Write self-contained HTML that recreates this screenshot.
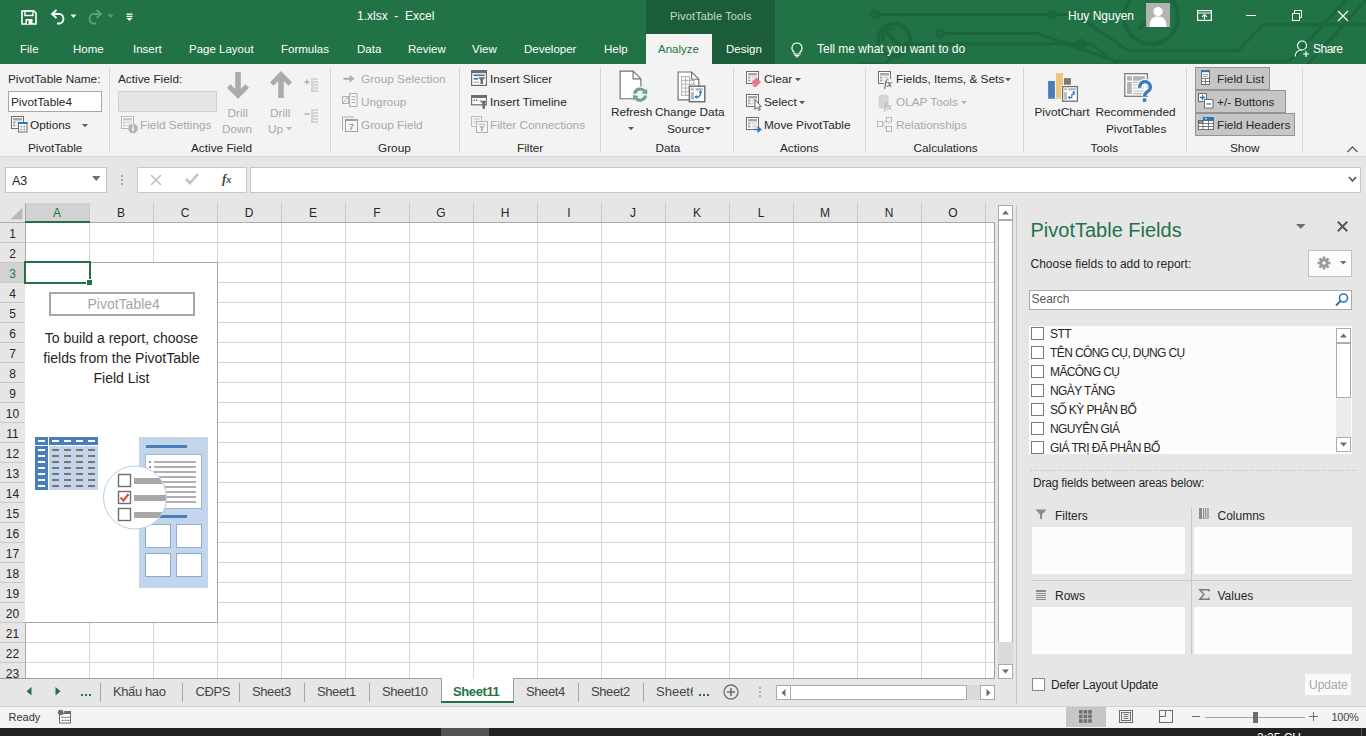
<!DOCTYPE html>
<html><head><meta charset="utf-8"><title>Excel</title>
<style>
html,body{margin:0;padding:0;width:1366px;height:736px;overflow:hidden;background:#e6e6e6;font-family:"Liberation Sans",sans-serif}
.a{position:absolute;box-sizing:border-box}
.t{position:absolute;white-space:nowrap;line-height:1;font-family:"Liberation Sans",sans-serif}
svg{overflow:visible}
</style></head><body>
<div class="a" style="left:0px;top:0px;width:1366px;height:64px;background:#217346"></div>
<div class="a" style="left:0px;top:64px;width:1366px;height:92px;background:#f3f3f3"></div>
<div class="a" style="left:0px;top:156px;width:1366px;height:1px;background:#d4d4d4"></div>
<div class="a" style="left:0px;top:157px;width:1366px;height:571px;background:#e6e6e6"></div>
<div class="a" style="left:0px;top:728px;width:1366px;height:8px;background:#1f1f1f"></div>
<svg class="a" style="left:0px;top:0px;clip-path:inset(0 0 0 0)" width="1366" height="64" viewBox="0 0 1366 64"><g fill="none" stroke="#1c663c" stroke-width="3">
<path d="M875 14.5 H1075 L1129 51 H1238 L1263 24.8 H1366"/>
<circle cx="875" cy="14.5" r="3.5"/><circle cx="1053" cy="14.5" r="3.5"/>
<path d="M941 33.5 H1038 L1115 61 H1290 L1347 -1"/><circle cx="941" cy="33.5" r="3.5"/>
<path d="M855 66 L863 64 H885 L906 43.8 H1091 L1118 65"/><circle cx="1081" cy="43.8" r="3.5"/>
<circle cx="894" cy="40" r="16" stroke-width="4"/><path d="M884 30 L900 46 M883 29 H895 M883 29 V41" stroke-width="4"/>
<circle cx="1151" cy="17" r="27" stroke-width="4"/><path d="M1138 30 L1160 8 M1161 7 H1149 M1161 7 V19" stroke-width="4"/>
<path d="M1307 65 L1367 -1"/>
</g></svg>
<div class="a" style="left:646px;top:0px;width:129px;height:64px;background:#1b5d39"></div>
<div class="a" style="left:646px;top:34px;width:66px;height:30px;background:#f3f3f3"></div>
<svg class="a" style="left:21px;top:10px;" width="16" height="15" viewBox="0 0 16 15"><path d="M1 1 H13 L15 3 V14 H1 Z" fill="none" stroke="#fff" stroke-width="1.6"/><rect x="4" y="1" width="8" height="4.5" fill="none" stroke="#fff" stroke-width="1.4"/><rect x="4.5" y="9" width="7" height="5" fill="#fff"/><rect x="6" y="10.5" width="1.6" height="3.5" fill="#217346"/></svg>
<svg class="a" style="left:50px;top:9px;" width="17" height="15" viewBox="0 0 17 15"><path d="M3 5 H10 A5 5 0 0 1 10 14.5 H7" fill="none" stroke="#fff" stroke-width="1.8"/><path d="M6.5 1 L2 5 L6.5 9" fill="none" stroke="#fff" stroke-width="1.8"/></svg>
<svg class="a" style="left:70px;top:14px;" width="7" height="5" viewBox="0 0 7 5"><path d="M0.5 0.5 H6.5 L3.5 4 Z" fill="#fff"/></svg>
<svg class="a" style="left:86px;top:9px;" width="17" height="15" viewBox="0 0 17 15"><path d="M14 5 H7 A5 5 0 0 0 7 14.5 H10" fill="none" stroke="#5f9d7a" stroke-width="1.8"/><path d="M10.5 1 L15 5 L10.5 9" fill="none" stroke="#5f9d7a" stroke-width="1.8"/></svg>
<svg class="a" style="left:107px;top:14px;" width="7" height="5" viewBox="0 0 7 5"><path d="M0.5 0.5 H6.5 L3.5 4 Z" fill="#5f9d7a"/></svg>
<svg class="a" style="left:126px;top:13px;" width="7" height="8" viewBox="0 0 7 8"><rect x="0.5" y="0.5" width="6" height="1.3" fill="#fff"/><rect x="0.5" y="2.8" width="6" height="1.3" fill="#fff"/><path d="M0.5 5 H6.5 L3.5 8 Z" fill="#fff"/></svg>
<div class="t" style="left:357px;top:10px;font-size:12px;color:#ffffff;">1.xlsx&nbsp;&nbsp;-&nbsp;&nbsp;Excel</div>
<div class="t" style="left:670px;top:11px;font-size:11.1px;color:#c5dccd;letter-spacing:0.1px">PivotTable Tools</div>
<div class="t" style="left:20px;top:44px;font-size:11.5px;color:#ffffff;">File</div>
<div class="t" style="left:73px;top:44px;font-size:11.5px;color:#ffffff;">Home</div>
<div class="t" style="left:133px;top:44px;font-size:11.5px;color:#ffffff;">Insert</div>
<div class="t" style="left:189px;top:44px;font-size:11.5px;color:#ffffff;">Page Layout</div>
<div class="t" style="left:281px;top:44px;font-size:11.5px;color:#ffffff;">Formulas</div>
<div class="t" style="left:357px;top:44px;font-size:11.5px;color:#ffffff;">Data</div>
<div class="t" style="left:408px;top:44px;font-size:11.5px;color:#ffffff;">Review</div>
<div class="t" style="left:472px;top:44px;font-size:11.5px;color:#ffffff;">View</div>
<div class="t" style="left:524px;top:44px;font-size:11.5px;color:#ffffff;">Developer</div>
<div class="t" style="left:604px;top:44px;font-size:11.5px;color:#ffffff;">Help</div>
<div class="t" style="left:726px;top:44px;font-size:11.5px;color:#ffffff;">Design</div>
<div class="t" style="left:658px;top:44px;font-size:11.5px;color:#217346;">Analyze</div>
<svg class="a" style="left:790px;top:42px;" width="14" height="15" viewBox="0 0 14 15"><path d="M7 1 A5 5 0 0 1 10 10 V12 H4 V10 A5 5 0 0 1 7 1 Z" fill="none" stroke="#fff" stroke-width="1.2"/><path d="M4.5 13.5 H9.5 M5.5 14.8 H8.5" stroke="#fff" stroke-width="1"/></svg>
<div class="t" style="left:817px;top:43px;font-size:12px;color:#ffffff;">Tell me what you want to do</div>
<div class="t" style="left:1068px;top:10px;font-size:12px;color:#ffffff;">Huy Nguyen</div>
<div class="a" style="left:1146px;top:3px;width:24px;height:24px;background:#b3b3b3"></div>
<svg class="a" style="left:1146px;top:3px;" width="24" height="24" viewBox="0 0 24 24"><circle cx="12" cy="8.5" r="4.6" fill="#fff"/><path d="M3.5 24 C3.5 16 7 13.5 12 13.5 C17 13.5 20.5 16 20.5 24 Z" fill="#fff"/></svg>
<svg class="a" style="left:1197px;top:10px;" width="15" height="11" viewBox="0 0 15 11"><rect x="0.6" y="0.6" width="13.8" height="9.8" fill="none" stroke="#fff" stroke-width="1.2"/><path d="M0.6 3 H14.4" stroke="#fff" stroke-width="1"/><path d="M7.5 9.5 V4.5 M5 7 L7.5 4.5 L10 7" fill="none" stroke="#fff" stroke-width="1.1"/></svg>
<div class="a" style="left:1246px;top:15px;width:10px;height:1px;background:#fff"></div>
<svg class="a" style="left:1291px;top:9px;" width="12" height="12" viewBox="0 0 12 12"><rect x="1.5" y="4.5" width="7" height="7" fill="none" stroke="#fff" stroke-width="1"/><path d="M3.5 4.5 V1.5 H10.5 V8.5 H8.5" fill="none" stroke="#fff" stroke-width="1"/></svg>
<svg class="a" style="left:1337px;top:10px;" width="12" height="12" viewBox="0 0 12 12"><path d="M1 1 L11 11 M11 1 L1 11" stroke="#fff" stroke-width="1.2"/></svg>
<svg class="a" style="left:1294px;top:40px;" width="16" height="17" viewBox="0 0 16 17"><circle cx="8" cy="5.5" r="4.5" fill="none" stroke="#fff" stroke-width="1.2"/><path d="M1 16.5 C1.5 12 4 10 8 10" fill="none" stroke="#fff" stroke-width="1.2"/><path d="M12 11 V17 M9 14 H15" stroke="#fff" stroke-width="1.2"/></svg>
<div class="t" style="left:1313px;top:43px;font-size:12px;color:#ffffff;letter-spacing:-0.5px">Share</div>
<div class="t" style="left:8px;top:74px;font-size:11.8px;color:#262626;">PivotTable Name:</div>
<div class="a" style="left:8px;top:91px;width:94px;height:21px;background:#fff;border:1px solid #a6a6a6"></div>
<div class="t" style="left:11px;top:97px;font-size:11.8px;color:#262626;">PivotTable4</div>
<svg class="a" style="left:11px;top:116px;" width="17" height="17" viewBox="0 0 17 17"><rect x="0.5" y="0.5" width="12" height="12" fill="#fff" stroke="#6d6d6d"/><rect x="2" y="2" width="9" height="2.5" fill="#a6a6a6"/><rect x="2" y="5.5" width="2.5" height="2" fill="#a6a6a6"/><rect x="2" y="8.5" width="2.5" height="2" fill="#a6a6a6"/><rect x="5.5" y="5.5" width="5.5" height="2" fill="#d6d6d6"/><rect x="5.5" y="8.5" width="5.5" height="2" fill="#d6d6d6"/><rect x="7.5" y="6.5" width="8.5" height="9.5" fill="#fff" stroke="#6d6d6d"/><rect x="7" y="6" width="9.5" height="2" fill="#2e75b6"/><path d="M9.5 10.5 h1.5 M12.5 10.5 h1.5 M9.5 13.5 h1.5 M12.5 13.5 h1.5" stroke="#8a8a8a" stroke-width="1.3"/></svg>
<div class="t" style="left:30px;top:120px;font-size:11.8px;color:#262626;">Options</div>
<svg class="a" style="left:82px;top:124px;" width="6" height="4" viewBox="0 0 6 4"><path d="M0 0 H6 L3 3.2 Z" fill="#595959"/></svg>
<div class="t" style="left:28px;top:143px;font-size:11.8px;color:#262626;">PivotTable</div>
<div class="a" style="left:109px;top:68px;width:1px;height:84px;background:#d5d5d5"></div>
<div class="t" style="left:118px;top:74px;font-size:11.8px;color:#262626;">Active Field:</div>
<div class="a" style="left:118px;top:91px;width:99px;height:21px;background:#e6e6e6;border:1px solid #d0d0d0"></div>
<svg class="a" style="left:121px;top:116px;" width="17" height="17" viewBox="0 0 17 17"><rect x="0.5" y="0.5" width="12" height="12" fill="#fff" stroke="#b8b8b8"/><rect x="2" y="2" width="9" height="2.5" fill="#c8c8c8"/><rect x="2" y="5.5" width="2.5" height="2" fill="#c8c8c8"/><rect x="2" y="8.5" width="2.5" height="2" fill="#c8c8c8"/><rect x="5.5" y="5.5" width="5.5" height="2" fill="#d6d6d6"/><rect x="5.5" y="8.5" width="5.5" height="2" fill="#d6d6d6"/><circle cx="12" cy="12.5" r="4.8" fill="#b4b4b4"/><rect x="11.1" y="11.2" width="1.8" height="4" fill="#f3f3f3"/><rect x="11.1" y="8.8" width="1.8" height="1.6" fill="#f3f3f3"/></svg>
<div class="t" style="left:140px;top:120px;font-size:11.8px;color:#a8a8a8;">Field Settings</div>
<svg class="a" style="left:227px;top:72px;" width="22" height="28" viewBox="0 0 22 28"><path d="M8.2 0 H13.8 V17 L18.5 12.3 L22 15.8 L11 27 L0 15.8 L3.5 12.3 L8.2 17 Z" fill="#ababab"/></svg>
<div class="t" style="left:227.5px;top:108px;font-size:11.8px;color:#a8a8a8;">Drill</div>
<div class="t" style="left:222px;top:123.5px;font-size:11.8px;color:#a8a8a8;">Down</div>
<svg class="a" style="left:270px;top:71px;" width="22" height="28" viewBox="0 0 22 28"><path d="M8.2 27 H13.8 V10 L18.5 14.7 L22 11.2 L11 0 L0 11.2 L3.5 14.7 L8.2 10 Z" fill="#ababab"/></svg>
<div class="t" style="left:270px;top:108px;font-size:11.8px;color:#a8a8a8;">Drill</div>
<div class="t" style="left:268px;top:123.5px;font-size:11.8px;color:#a8a8a8;">Up</div>
<svg class="a" style="left:286px;top:127px;" width="6" height="4" viewBox="0 0 6 4"><path d="M0 0 H6 L3 3.2 Z" fill="#b0b0b0"/></svg>
<svg class="a" style="left:304px;top:78px;" width="15" height="14" viewBox="0 0 15 14"><path d="M0.5 4 H5.5 M3 1.5 V6.5" stroke="#b0b0b0" stroke-width="1.5"/><path d="M7 1 H14 M9 4 H14 M9 7 H14 M9 10 H14 M7 13 H14 M8 2 V13" stroke="#b8b8b8" stroke-width="1"/></svg>
<svg class="a" style="left:304px;top:109px;" width="15" height="14" viewBox="0 0 15 14"><path d="M0.5 5 H5.5" stroke="#b0b0b0" stroke-width="1.5"/><path d="M7 1 H14 M9 4 H14 M9 7 H14 M9 10 H14 M7 13 H14 M8 2 V13" stroke="#b8b8b8" stroke-width="1"/></svg>
<div class="t" style="left:191px;top:143px;font-size:11.8px;color:#262626;">Active Field</div>
<div class="a" style="left:330px;top:68px;width:1px;height:84px;background:#d5d5d5"></div>
<svg class="a" style="left:343px;top:75px;" width="13" height="8" viewBox="0 0 13 8"><path d="M0.5 2.8 H6.5 V0 L11.5 3.8 L6.5 7.6 V4.8 H0.5 Z" fill="#ababab"/></svg>
<div class="t" style="left:361px;top:74px;font-size:11.8px;color:#a8a8a8;">Group Selection</div>
<svg class="a" style="left:342px;top:93px;" width="16" height="14" viewBox="0 0 16 14"><rect x="0.5" y="3.5" width="6" height="7" fill="none" stroke="#b0b0b0"/><path d="M1 10 L6 4" stroke="#b0b0b0"/><rect x="7.5" y="0.5" width="7.5" height="13" fill="none" stroke="#b0b0b0"/><path d="M9.5 3.5 H13 M9.5 6.5 H13 M9.5 9.5 H13" stroke="#b0b0b0"/></svg>
<div class="t" style="left:361px;top:97px;font-size:11.8px;color:#a8a8a8;">Ungroup</div>
<svg class="a" style="left:342px;top:116px;" width="16" height="16" viewBox="0 0 16 16"><path d="M0.5 15 V1 H12" fill="none" stroke="#b0b0b0"/><rect x="3.5" y="3.5" width="12" height="12" fill="#f7f4f8" stroke="#a0a0a0"/><rect x="3.5" y="3" width="12" height="2" fill="#a0a0a0"/><text x="9.5" y="14.3" font-size="9.5" font-weight="bold" text-anchor="middle" fill="#a0a0a0" font-family="Liberation Sans">7</text></svg>
<div class="t" style="left:361px;top:120px;font-size:11.8px;color:#a8a8a8;">Group Field</div>
<div class="t" style="left:378px;top:143px;font-size:11.8px;color:#262626;">Group</div>
<div class="a" style="left:459px;top:68px;width:1px;height:84px;background:#d5d5d5"></div>
<svg class="a" style="left:471px;top:70px;" width="16" height="16" viewBox="0 0 16 16"><rect x="0.6" y="0.6" width="14.8" height="14.8" fill="#fff" stroke="#6d6d6d" stroke-width="1.2"/><rect x="0" y="0" width="16" height="3.2" fill="#6d6d6d"/><rect x="2.5" y="4.5" width="11" height="1.6" fill="#2e75b6"/><rect x="2.5" y="8" width="4.5" height="1.6" fill="#2e75b6"/><rect x="2.5" y="11.5" width="5.5" height="1.6" fill="#9dc3e6"/><path d="M7 7.2 H14.5 L12 10 V14 H9.5 V10 Z" fill="#6d6d6d"/></svg>
<div class="t" style="left:490px;top:74px;font-size:11.8px;color:#262626;">Insert Slicer</div>
<svg class="a" style="left:471px;top:95px;" width="17" height="15" viewBox="0 0 17 15"><rect x="0.6" y="0.6" width="14.8" height="9.2" fill="#fff" stroke="#6d6d6d" stroke-width="1.2"/><rect x="0" y="0" width="16" height="3" fill="#6d6d6d"/><path d="M2.5 5.3 h1.4 M5 5.3 h1.4" stroke="#2e75b6" stroke-width="1.5"/><path d="M8.5 5.3 h1.2" stroke="#9a9a9a" stroke-width="1.2"/><rect x="8" y="5.6" width="9" height="2" fill="#f3f3f3"/><path d="M9 5.8 H16.5 L14 8.8 V13.8 H11.5 V8.8 Z" fill="#6d6d6d"/></svg>
<div class="t" style="left:490px;top:97px;font-size:11.8px;color:#262626;">Insert Timeline</div>
<svg class="a" style="left:471px;top:116px;" width="17" height="17" viewBox="0 0 17 17"><rect x="0.5" y="0.5" width="10" height="10" fill="#f3f3f3" stroke="#bdbdbd"/><path d="M2.5 3 H8.5 M2.5 6 H4.5" stroke="#cfcfcf" stroke-width="1.4"/><rect x="5.5" y="5.5" width="11" height="11" fill="#f7f4f8" stroke="#b0b0b0"/><path d="M7.5 8.3 H14.5" stroke="#c0c0c0" stroke-width="1.2"/><path d="M8 10 H14 L12 12.3 V15 H10 V12.3 Z" fill="#b8b8b8"/></svg>
<div class="t" style="left:490px;top:120px;font-size:11.8px;color:#a8a8a8;">Filter Connections</div>
<div class="t" style="left:517px;top:143px;font-size:11.8px;color:#262626;">Filter</div>
<div class="a" style="left:600px;top:68px;width:1px;height:84px;background:#d5d5d5"></div>
<svg class="a" style="left:605px;top:66px;" width="120" height="40" viewBox="0 0 120 40"><path d="M15.1 5.1 H28.1 L35.9 12.9 V32.7 H15.1 Z" fill="#fff" stroke="#707070" stroke-width="1.15"/><path d="M28.1 5.1 V12.9 H35.9" fill="none" stroke="#707070" stroke-width="1.15"/><circle cx="35.1" cy="28.6" r="8.3" fill="#f3f3f3"/><path d="M29.59 27.63 A5.6 5.6 0 0 1 39.39 25.00" fill="none" stroke="#64a58c" stroke-width="3"/><path d="M42.09 28.22 L42.15 22.69 L36.63 27.31 Z" fill="#64a58c"/><path d="M40.61 29.57 A5.6 5.6 0 0 1 30.81 32.20" fill="none" stroke="#64a58c" stroke-width="3"/><path d="M28.11 28.98 L28.05 34.51 L33.57 29.89 Z" fill="#64a58c"/><path d="M73.1 6 H86.6 L93.8 13.2 V33.8 H73.1 Z" fill="#fff" stroke="#707070" stroke-width="1.15"/><path d="M86.6 6 V13.2 H93.8" fill="none" stroke="#707070" stroke-width="1.15"/><g stroke="#b8b8b8" stroke-width="1.1" fill="none"><rect x="76.6" y="10.6" width="8" height="18.8"/><path d="M80.6 10.6 V29.4 M76.6 14.4 H90 M76.6 18.2 H90 M76.6 22 H84 M76.6 25.7 H84 M88.6 15 V19"/></g><rect x="84.4" y="20.2" width="15.4" height="15.5" fill="#fff" stroke="#707070" stroke-width="1.5"/><rect x="86.1" y="22.2" width="2.8" height="2.4" fill="#b4b4b4"/><rect x="90.4" y="22.2" width="7.4" height="2.4" fill="#b4b4b4"/><rect x="86.1" y="26.2" width="2.8" height="7.4" fill="#b4b4b4"/><path d="M90.5 31 H93.5 L95.5 28.5 V25.8" fill="none" stroke="#2e75b6" stroke-width="1.3"/><path d="M89.3 31 L91.8 29 V33 Z M95.5 24.3 L93.5 26.8 H97.5 Z" fill="#2e75b6"/></svg>
<div class="t" style="left:611px;top:107px;font-size:11.8px;color:#262626;">Refresh</div>
<svg class="a" style="left:628px;top:127px;" width="6" height="4" viewBox="0 0 6 4"><path d="M0 0 H6 L3 3.2 Z" fill="#595959"/></svg>
<div class="t" style="left:655px;top:107px;font-size:11.8px;color:#262626;">Change Data</div>
<div class="t" style="left:667px;top:123.5px;font-size:11.8px;color:#262626;">Source</div>
<svg class="a" style="left:705px;top:127px;" width="6" height="4" viewBox="0 0 6 4"><path d="M0 0 H6 L3 3.2 Z" fill="#595959"/></svg>
<div class="t" style="left:655.5px;top:143px;font-size:11.8px;color:#262626;">Data</div>
<div class="a" style="left:733px;top:68px;width:1px;height:84px;background:#d5d5d5"></div>
<svg class="a" style="left:746px;top:71px;" width="16" height="16" viewBox="0 0 16 16"><rect x="0.5" y="0.5" width="12" height="12" fill="#fff" stroke="#6d6d6d"/><rect x="2" y="2" width="9" height="2.5" fill="#a6a6a6"/><rect x="2" y="5.5" width="2.5" height="2" fill="#a6a6a6"/><rect x="2" y="8.5" width="2.5" height="2" fill="#a6a6a6"/><rect x="5.5" y="5.5" width="5.5" height="2" fill="#d6d6d6"/><rect x="5.5" y="8.5" width="5.5" height="2" fill="#d6d6d6"/><path d="M5.5 11.5 L10.5 6.5 L15 11 L10 16 H7.5 Z" fill="#e8788e"/><path d="M5.5 11.5 L8 14 L7.5 16 Z" fill="#f3f3f3" opacity="0.4"/></svg>
<div class="t" style="left:764px;top:74px;font-size:11.8px;color:#262626;">Clear</div>
<svg class="a" style="left:795px;top:78px;" width="6" height="4" viewBox="0 0 6 4"><path d="M0 0 H6 L3 3.2 Z" fill="#595959"/></svg>
<svg class="a" style="left:746px;top:94px;" width="16" height="17" viewBox="0 0 16 17"><rect x="0.5" y="0.5" width="12" height="12" fill="#fff" stroke="#6d6d6d"/><rect x="2" y="2" width="9" height="2.5" fill="#a6a6a6"/><rect x="2" y="5.5" width="2.5" height="2" fill="#a6a6a6"/><rect x="2" y="8.5" width="2.5" height="2" fill="#a6a6a6"/><rect x="5.5" y="5.5" width="5.5" height="2" fill="#d6d6d6"/><rect x="5.5" y="8.5" width="5.5" height="2" fill="#d6d6d6"/><path d="M9 5.5 V15.5 L11.2 13.4 L12.8 16.5 L14.3 15.7 L12.8 12.8 H15.3 Z" fill="#fff" stroke="#505050" stroke-width="0.9"/></svg>
<div class="t" style="left:764px;top:97px;font-size:11.8px;color:#262626;">Select</div>
<svg class="a" style="left:799px;top:101px;" width="6" height="4" viewBox="0 0 6 4"><path d="M0 0 H6 L3 3.2 Z" fill="#595959"/></svg>
<svg class="a" style="left:746px;top:117px;" width="16" height="16" viewBox="0 0 16 16"><rect x="0.5" y="0.5" width="12" height="12" fill="#fff" stroke="#6d6d6d"/><rect x="2" y="2" width="9" height="2.5" fill="#a6a6a6"/><rect x="2" y="5.5" width="2.5" height="2" fill="#a6a6a6"/><rect x="2" y="8.5" width="2.5" height="2" fill="#a6a6a6"/><rect x="5.5" y="5.5" width="5.5" height="2" fill="#d6d6d6"/><rect x="5.5" y="8.5" width="5.5" height="2" fill="#d6d6d6"/><path d="M8 12.5 H14 M11.5 10 L14.5 12.5 L11.5 15" fill="none" stroke="#2e75b6" stroke-width="1.7"/></svg>
<div class="t" style="left:764px;top:120px;font-size:11.8px;color:#262626;">Move PivotTable</div>
<div class="t" style="left:780px;top:143px;font-size:11.8px;color:#262626;">Actions</div>
<div class="a" style="left:865px;top:68px;width:1px;height:84px;background:#d5d5d5"></div>
<svg class="a" style="left:878px;top:71px;" width="16" height="17" viewBox="0 0 16 17"><rect x="0.5" y="0.5" width="12" height="12" fill="#fff" stroke="#6d6d6d"/><rect x="2" y="2" width="9" height="2.5" fill="#a6a6a6"/><rect x="2" y="5.5" width="2.5" height="2" fill="#a6a6a6"/><rect x="2" y="8.5" width="2.5" height="2" fill="#a6a6a6"/><rect x="5.5" y="5.5" width="5.5" height="2" fill="#d6d6d6"/><rect x="5.5" y="8.5" width="5.5" height="2" fill="#d6d6d6"/><rect x="6" y="8" width="10" height="9" fill="#f3f3f3"/><text x="6" y="16" font-size="11" font-style="italic" fill="#404040" font-family="Liberation Serif">fx</text></svg>
<div class="t" style="left:896px;top:74px;font-size:11.8px;color:#262626;">Fields, Items, &amp; Sets</div>
<svg class="a" style="left:1005px;top:78px;" width="6" height="4" viewBox="0 0 6 4"><path d="M0 0 H6 L3 3.2 Z" fill="#595959"/></svg>
<svg class="a" style="left:878px;top:94px;" width="16" height="17" viewBox="0 0 16 17"><ellipse cx="5.5" cy="2.5" rx="5" ry="2" fill="#d4d4d4"/><rect x="0.5" y="2.5" width="10" height="10" fill="#d4d4d4"/><ellipse cx="5.5" cy="12.5" rx="5" ry="2" fill="#d4d4d4"/><text x="6" y="16" font-size="11" font-style="italic" fill="#b0b0b0" font-family="Liberation Serif">fx</text></svg>
<div class="t" style="left:896px;top:97px;font-size:11.8px;color:#a8a8a8;">OLAP Tools</div>
<svg class="a" style="left:961px;top:101px;" width="6" height="4" viewBox="0 0 6 4"><path d="M0 0 H6 L3 3.2 Z" fill="#b0b0b0"/></svg>
<svg class="a" style="left:877px;top:117px;" width="16" height="15" viewBox="0 0 16 15"><rect x="0.5" y="4.5" width="5" height="5" fill="none" stroke="#b8b8b8"/><rect x="9.5" y="0.5" width="5" height="4.5" fill="none" stroke="#b8b8b8"/><rect x="9.5" y="9.5" width="5" height="5" fill="none" stroke="#b8b8b8"/><path d="M5.5 7 L9.5 3 M5.5 7 L9.5 12" stroke="#b8b8b8"/></svg>
<div class="t" style="left:896px;top:120px;font-size:11.8px;color:#a8a8a8;">Relationships</div>
<div class="t" style="left:913.5px;top:143px;font-size:11.8px;color:#262626;">Calculations</div>
<div class="a" style="left:1023px;top:68px;width:1px;height:84px;background:#d5d5d5"></div>
<svg class="a" style="left:1040px;top:68px;" width="120" height="40" viewBox="0 0 120 40"><rect x="8.1" y="13" width="6.8" height="17.8" fill="#4a7ebb"/><rect x="16" y="5.1" width="7" height="25.7" fill="#efc77b"/><rect x="24" y="10.1" width="6.9" height="6.6" fill="#7a7a7a"/><rect x="21.2" y="17.2" width="17.6" height="17.4" fill="#f3f3f3"/><rect x="22.6" y="18.6" width="14.8" height="14.6" fill="#fff" stroke="#707070" stroke-width="1.3"/><rect x="24.2" y="20.2" width="2.6" height="2.2" fill="#b4b4b4"/><rect x="28.3" y="20.2" width="7.6" height="2.2" fill="#b4b4b4"/><rect x="24.2" y="24.2" width="2.6" height="7.4" fill="#b4b4b4"/><path d="M29 29.6 H31.8 V26.5 H33.8 V24.6" fill="none" stroke="#3a78c0" stroke-width="1.2"/><path d="M27.6 29.6 L30 27.6 V31.6 Z M33.8 22.8 L31.8 25.2 H35.8 Z" fill="#3a78c0"/><rect x="84.8" y="5.7" width="22.6" height="22.6" fill="#fff" stroke="#7a7a7a" stroke-width="1.3"/><rect x="87" y="8.1" width="4.8" height="4.6" fill="#b4b4b4"/><rect x="93.1" y="8.1" width="11.9" height="4.6" fill="#b4b4b4"/><rect x="87" y="14.1" width="4.8" height="11.8" fill="#b4b4b4"/><path d="M93.1 14.3 H104.5 M93.1 25.7 H104.5" stroke="#9a9a9a" stroke-width="0.9"/><path d="M93.1 17 H104 M93.1 20 H104 M93.1 23 H104" stroke="#cfcfcf" stroke-width="1.6"/><path d="M99.8 19.8 A5.3 5.3 0 1 1 107.6 23.6 C105.6 24.8 104.6 25.8 104.6 28.3" fill="none" stroke="#f3f3f3" stroke-width="6"/><rect x="101.6" y="29.3" width="6" height="5.6" fill="#f3f3f3"/><path d="M99.8 19.8 A5.3 5.3 0 1 1 107.6 23.6 C105.6 24.8 104.6 25.8 104.6 28.3" fill="none" stroke="#3a78c0" stroke-width="3.3"/><rect x="102.8" y="30.4" width="3.5" height="3.4" fill="#3a78c0"/></svg>
<div class="t" style="left:1034.5px;top:107px;font-size:11.8px;color:#262626;">PivotChart</div>
<div class="t" style="left:1095.5px;top:107px;font-size:11.8px;color:#262626;">Recommended</div>
<div class="t" style="left:1106px;top:123.5px;font-size:11.8px;color:#262626;">PivotTables</div>
<div class="t" style="left:1090.5px;top:143px;font-size:11.8px;color:#262626;">Tools</div>
<div class="a" style="left:1186px;top:68px;width:1px;height:84px;background:#d5d5d5"></div>
<div class="a" style="left:1195px;top:67px;width:75px;height:23px;background:#c6c6c6;border:1px solid #939393"></div>
<div class="a" style="left:1195px;top:90px;width:91px;height:23px;background:#c6c6c6;border:1px solid #939393"></div>
<div class="a" style="left:1195px;top:113px;width:100px;height:23px;background:#c6c6c6;border:1px solid #939393"></div>
<svg class="a" style="left:1201px;top:70px;" width="9" height="15" viewBox="0 0 9 15"><rect x="0.5" y="0.5" width="8" height="14" fill="#fff" stroke="#6d6d6d"/><rect x="0" y="0" width="9" height="2.2" fill="#2e75b6"/><path d="M2 4.5 H7 M2 6.5 H7" stroke="#9a9a9a" stroke-width="0.9"/><path d="M0.5 8.5 H8.5 M0.5 11.5 H8.5 M4.5 8.5 V14.5" stroke="#6d6d6d" stroke-width="0.9"/></svg>
<div class="t" style="left:1217px;top:74px;font-size:11.8px;color:#262626;">Field List</div>
<svg class="a" style="left:1198px;top:93px;" width="16" height="16" viewBox="0 0 16 16"><rect x="0.5" y="0.5" width="8" height="8" fill="#fff" stroke="#6d6d6d"/><path d="M1.8 4.5 H7.2 M4.5 1.8 V7.2" stroke="#2e75b6" stroke-width="1.3"/><rect x="6.5" y="6.5" width="8.5" height="8.5" fill="#fff" stroke="#6d6d6d"/><path d="M8.5 11 H13" stroke="#2e75b6" stroke-width="1.3"/></svg>
<div class="t" style="left:1217px;top:97px;font-size:11.8px;color:#262626;">+/- Buttons</div>
<svg class="a" style="left:1198px;top:117px;" width="16" height="13" viewBox="0 0 16 13"><rect x="0.5" y="3.5" width="15" height="9" fill="#fff" stroke="#6d6d6d"/><rect x="5" y="0" width="11" height="3.5" fill="#2e75b6"/><rect x="0" y="3.5" width="5" height="3" fill="#2e75b6"/><path d="M0.5 6.5 H15.5 M0.5 9.5 H15.5 M5 3.5 V12.5 M10.5 3.5 V12.5" stroke="#6d6d6d" stroke-width="0.9"/><path d="M7 1.7 H9 M1.5 5 H3.5" stroke="#fff" stroke-width="0.9"/></svg>
<div class="t" style="left:1217px;top:120px;font-size:11.8px;color:#262626;">Field Headers</div>
<div class="t" style="left:1230px;top:143px;font-size:11.8px;color:#262626;">Show</div>
<div class="a" style="left:1302px;top:68px;width:1px;height:84px;background:#d5d5d5"></div>
<svg class="a" style="left:1347px;top:146px;" width="11" height="7" viewBox="0 0 11 7"><path d="M0.5 6 L5.5 1 L10.5 6" fill="none" stroke="#595959" stroke-width="1.3"/></svg>
<div class="a" style="left:5px;top:167px;width:102px;height:26px;background:#fff;border:1px solid #c6c6c6"></div>
<div class="t" style="left:12px;top:175px;font-size:12.5px;color:#262626;">A3</div>
<svg class="a" style="left:92px;top:176px;" width="9" height="6" viewBox="0 0 9 6"><path d="M0 0 H8.5 L4.25 5 Z" fill="#6d6d6d"/></svg>
<div class="a" style="left:121px;top:175px;width:2px;height:2px;background:#a6a6a6"></div>
<div class="a" style="left:121px;top:179px;width:2px;height:2px;background:#a6a6a6"></div>
<div class="a" style="left:121px;top:183px;width:2px;height:2px;background:#a6a6a6"></div>
<div class="a" style="left:137px;top:167px;width:110px;height:26px;background:#fff;border:1px solid #c6c6c6"></div>
<svg class="a" style="left:150px;top:174px;" width="12" height="12" viewBox="0 0 12 12"><path d="M1 1 L11 11 M11 1 L1 11" stroke="#c0c0c0" stroke-width="1.6"/></svg>
<svg class="a" style="left:185px;top:173px;" width="14" height="11" viewBox="0 0 14 11"><path d="M1 6 L5 10 L13 1" fill="none" stroke="#c3c3c3" stroke-width="2.6"/></svg>
<div class="t" style="left:222px;top:172px;font-family:'Liberation Serif';font-style:italic;font-weight:bold;font-size:13px;color:#444">f<span style="font-size:10px">x</span></div>
<div class="a" style="left:250px;top:167px;width:1111px;height:26px;background:#fff;border:1px solid #c6c6c6"></div>
<svg class="a" style="left:1348px;top:176px;" width="9" height="7" viewBox="0 0 9 7"><path d="M1 1 L4.5 5 L8 1" fill="none" stroke="#595959" stroke-width="1.8"/></svg>
<div class="a" style="left:0px;top:203px;width:995px;height:19px;background:#e6e6e6"></div>
<div class="a" style="left:25px;top:203px;width:64px;height:19px;background:#d2d2d2"></div>
<div class="a" style="left:89px;top:203px;width:1px;height:19px;background:#c8c8c8"></div>
<div class="a" style="left:153px;top:203px;width:1px;height:19px;background:#c8c8c8"></div>
<div class="a" style="left:217px;top:203px;width:1px;height:19px;background:#c8c8c8"></div>
<div class="a" style="left:281px;top:203px;width:1px;height:19px;background:#c8c8c8"></div>
<div class="a" style="left:345px;top:203px;width:1px;height:19px;background:#c8c8c8"></div>
<div class="a" style="left:409px;top:203px;width:1px;height:19px;background:#c8c8c8"></div>
<div class="a" style="left:473px;top:203px;width:1px;height:19px;background:#c8c8c8"></div>
<div class="a" style="left:537px;top:203px;width:1px;height:19px;background:#c8c8c8"></div>
<div class="a" style="left:601px;top:203px;width:1px;height:19px;background:#c8c8c8"></div>
<div class="a" style="left:665px;top:203px;width:1px;height:19px;background:#c8c8c8"></div>
<div class="a" style="left:729px;top:203px;width:1px;height:19px;background:#c8c8c8"></div>
<div class="a" style="left:793px;top:203px;width:1px;height:19px;background:#c8c8c8"></div>
<div class="a" style="left:857px;top:203px;width:1px;height:19px;background:#c8c8c8"></div>
<div class="a" style="left:921px;top:203px;width:1px;height:19px;background:#c8c8c8"></div>
<div class="a" style="left:985px;top:203px;width:1px;height:19px;background:#c8c8c8"></div>
<svg class="a" style="left:10px;top:207px;" width="13" height="13" viewBox="0 0 13 13"><path d="M12.5 0.5 V12.5 H0.5 Z" fill="#b9b9b9"/></svg>
<div class="t" style="left:25px;top:207px;width:64px;text-align:center;font-size:12px;color:#217346">A</div>
<div class="t" style="left:89px;top:207px;width:64px;text-align:center;font-size:12px;color:#262626">B</div>
<div class="t" style="left:153px;top:207px;width:64px;text-align:center;font-size:12px;color:#262626">C</div>
<div class="t" style="left:217px;top:207px;width:64px;text-align:center;font-size:12px;color:#262626">D</div>
<div class="t" style="left:281px;top:207px;width:64px;text-align:center;font-size:12px;color:#262626">E</div>
<div class="t" style="left:345px;top:207px;width:64px;text-align:center;font-size:12px;color:#262626">F</div>
<div class="t" style="left:409px;top:207px;width:64px;text-align:center;font-size:12px;color:#262626">G</div>
<div class="t" style="left:473px;top:207px;width:64px;text-align:center;font-size:12px;color:#262626">H</div>
<div class="t" style="left:537px;top:207px;width:64px;text-align:center;font-size:12px;color:#262626">I</div>
<div class="t" style="left:601px;top:207px;width:64px;text-align:center;font-size:12px;color:#262626">J</div>
<div class="t" style="left:665px;top:207px;width:64px;text-align:center;font-size:12px;color:#262626">K</div>
<div class="t" style="left:729px;top:207px;width:64px;text-align:center;font-size:12px;color:#262626">L</div>
<div class="t" style="left:793px;top:207px;width:64px;text-align:center;font-size:12px;color:#262626">M</div>
<div class="t" style="left:857px;top:207px;width:64px;text-align:center;font-size:12px;color:#262626">N</div>
<div class="t" style="left:921px;top:207px;width:64px;text-align:center;font-size:12px;color:#262626">O</div>
<div class="a" style="left:25px;top:222px;width:970px;height:456px;background:#fff"></div>
<div class="a" style="left:0px;top:222px;width:25px;height:456px;background:#e6e6e6"></div>
<div class="a" style="left:0px;top:262px;width:25px;height:20px;background:#d2d2d2"></div>
<div class="a" style="left:89px;top:222px;width:1px;height:456px;background:#d5d5d5"></div>
<div class="a" style="left:153px;top:222px;width:1px;height:456px;background:#d5d5d5"></div>
<div class="a" style="left:217px;top:222px;width:1px;height:456px;background:#d5d5d5"></div>
<div class="a" style="left:281px;top:222px;width:1px;height:456px;background:#d5d5d5"></div>
<div class="a" style="left:345px;top:222px;width:1px;height:456px;background:#d5d5d5"></div>
<div class="a" style="left:409px;top:222px;width:1px;height:456px;background:#d5d5d5"></div>
<div class="a" style="left:473px;top:222px;width:1px;height:456px;background:#d5d5d5"></div>
<div class="a" style="left:537px;top:222px;width:1px;height:456px;background:#d5d5d5"></div>
<div class="a" style="left:601px;top:222px;width:1px;height:456px;background:#d5d5d5"></div>
<div class="a" style="left:665px;top:222px;width:1px;height:456px;background:#d5d5d5"></div>
<div class="a" style="left:729px;top:222px;width:1px;height:456px;background:#d5d5d5"></div>
<div class="a" style="left:793px;top:222px;width:1px;height:456px;background:#d5d5d5"></div>
<div class="a" style="left:857px;top:222px;width:1px;height:456px;background:#d5d5d5"></div>
<div class="a" style="left:921px;top:222px;width:1px;height:456px;background:#d5d5d5"></div>
<div class="a" style="left:985px;top:222px;width:1px;height:456px;background:#d5d5d5"></div>
<div class="a" style="left:0px;top:242px;width:25px;height:1px;background:#c8c8c8"></div>
<div class="a" style="left:25px;top:242px;width:970px;height:1px;background:#d5d5d5"></div>
<div class="a" style="left:0px;top:262px;width:25px;height:1px;background:#c8c8c8"></div>
<div class="a" style="left:25px;top:262px;width:970px;height:1px;background:#d5d5d5"></div>
<div class="a" style="left:0px;top:282px;width:25px;height:1px;background:#c8c8c8"></div>
<div class="a" style="left:25px;top:282px;width:970px;height:1px;background:#d5d5d5"></div>
<div class="a" style="left:0px;top:302px;width:25px;height:1px;background:#c8c8c8"></div>
<div class="a" style="left:25px;top:302px;width:970px;height:1px;background:#d5d5d5"></div>
<div class="a" style="left:0px;top:322px;width:25px;height:1px;background:#c8c8c8"></div>
<div class="a" style="left:25px;top:322px;width:970px;height:1px;background:#d5d5d5"></div>
<div class="a" style="left:0px;top:342px;width:25px;height:1px;background:#c8c8c8"></div>
<div class="a" style="left:25px;top:342px;width:970px;height:1px;background:#d5d5d5"></div>
<div class="a" style="left:0px;top:362px;width:25px;height:1px;background:#c8c8c8"></div>
<div class="a" style="left:25px;top:362px;width:970px;height:1px;background:#d5d5d5"></div>
<div class="a" style="left:0px;top:382px;width:25px;height:1px;background:#c8c8c8"></div>
<div class="a" style="left:25px;top:382px;width:970px;height:1px;background:#d5d5d5"></div>
<div class="a" style="left:0px;top:402px;width:25px;height:1px;background:#c8c8c8"></div>
<div class="a" style="left:25px;top:402px;width:970px;height:1px;background:#d5d5d5"></div>
<div class="a" style="left:0px;top:422px;width:25px;height:1px;background:#c8c8c8"></div>
<div class="a" style="left:25px;top:422px;width:970px;height:1px;background:#d5d5d5"></div>
<div class="a" style="left:0px;top:442px;width:25px;height:1px;background:#c8c8c8"></div>
<div class="a" style="left:25px;top:442px;width:970px;height:1px;background:#d5d5d5"></div>
<div class="a" style="left:0px;top:462px;width:25px;height:1px;background:#c8c8c8"></div>
<div class="a" style="left:25px;top:462px;width:970px;height:1px;background:#d5d5d5"></div>
<div class="a" style="left:0px;top:482px;width:25px;height:1px;background:#c8c8c8"></div>
<div class="a" style="left:25px;top:482px;width:970px;height:1px;background:#d5d5d5"></div>
<div class="a" style="left:0px;top:502px;width:25px;height:1px;background:#c8c8c8"></div>
<div class="a" style="left:25px;top:502px;width:970px;height:1px;background:#d5d5d5"></div>
<div class="a" style="left:0px;top:522px;width:25px;height:1px;background:#c8c8c8"></div>
<div class="a" style="left:25px;top:522px;width:970px;height:1px;background:#d5d5d5"></div>
<div class="a" style="left:0px;top:542px;width:25px;height:1px;background:#c8c8c8"></div>
<div class="a" style="left:25px;top:542px;width:970px;height:1px;background:#d5d5d5"></div>
<div class="a" style="left:0px;top:562px;width:25px;height:1px;background:#c8c8c8"></div>
<div class="a" style="left:25px;top:562px;width:970px;height:1px;background:#d5d5d5"></div>
<div class="a" style="left:0px;top:582px;width:25px;height:1px;background:#c8c8c8"></div>
<div class="a" style="left:25px;top:582px;width:970px;height:1px;background:#d5d5d5"></div>
<div class="a" style="left:0px;top:602px;width:25px;height:1px;background:#c8c8c8"></div>
<div class="a" style="left:25px;top:602px;width:970px;height:1px;background:#d5d5d5"></div>
<div class="a" style="left:0px;top:622px;width:25px;height:1px;background:#c8c8c8"></div>
<div class="a" style="left:25px;top:622px;width:970px;height:1px;background:#d5d5d5"></div>
<div class="a" style="left:0px;top:642px;width:25px;height:1px;background:#c8c8c8"></div>
<div class="a" style="left:25px;top:642px;width:970px;height:1px;background:#d5d5d5"></div>
<div class="a" style="left:0px;top:662px;width:25px;height:1px;background:#c8c8c8"></div>
<div class="a" style="left:25px;top:662px;width:970px;height:1px;background:#d5d5d5"></div>
<div class="t" style="left:0px;top:228px;width:25px;text-align:center;font-size:12px;color:#262626">1</div>
<div class="t" style="left:0px;top:248px;width:25px;text-align:center;font-size:12px;color:#262626">2</div>
<div class="t" style="left:0px;top:268px;width:25px;text-align:center;font-size:12px;color:#217346">3</div>
<div class="t" style="left:0px;top:288px;width:25px;text-align:center;font-size:12px;color:#262626">4</div>
<div class="t" style="left:0px;top:308px;width:25px;text-align:center;font-size:12px;color:#262626">5</div>
<div class="t" style="left:0px;top:328px;width:25px;text-align:center;font-size:12px;color:#262626">6</div>
<div class="t" style="left:0px;top:348px;width:25px;text-align:center;font-size:12px;color:#262626">7</div>
<div class="t" style="left:0px;top:368px;width:25px;text-align:center;font-size:12px;color:#262626">8</div>
<div class="t" style="left:0px;top:388px;width:25px;text-align:center;font-size:12px;color:#262626">9</div>
<div class="t" style="left:0px;top:408px;width:25px;text-align:center;font-size:12px;color:#262626">10</div>
<div class="t" style="left:0px;top:428px;width:25px;text-align:center;font-size:12px;color:#262626">11</div>
<div class="t" style="left:0px;top:448px;width:25px;text-align:center;font-size:12px;color:#262626">12</div>
<div class="t" style="left:0px;top:468px;width:25px;text-align:center;font-size:12px;color:#262626">13</div>
<div class="t" style="left:0px;top:488px;width:25px;text-align:center;font-size:12px;color:#262626">14</div>
<div class="t" style="left:0px;top:508px;width:25px;text-align:center;font-size:12px;color:#262626">15</div>
<div class="t" style="left:0px;top:528px;width:25px;text-align:center;font-size:12px;color:#262626">16</div>
<div class="t" style="left:0px;top:548px;width:25px;text-align:center;font-size:12px;color:#262626">17</div>
<div class="t" style="left:0px;top:568px;width:25px;text-align:center;font-size:12px;color:#262626">18</div>
<div class="t" style="left:0px;top:588px;width:25px;text-align:center;font-size:12px;color:#262626">19</div>
<div class="t" style="left:0px;top:608px;width:25px;text-align:center;font-size:12px;color:#262626">20</div>
<div class="t" style="left:0px;top:628px;width:25px;text-align:center;font-size:12px;color:#262626">21</div>
<div class="t" style="left:0px;top:648px;width:25px;text-align:center;font-size:12px;color:#262626">22</div>
<div class="t" style="left:0px;top:668px;width:25px;text-align:center;font-size:12px;color:#262626">23</div>
<div class="a" style="left:0px;top:222px;width:995px;height:1px;background:#ababab"></div>
<div class="a" style="left:25px;top:203px;width:1px;height:475px;background:#ababab"></div>
<div class="a" style="left:994px;top:222px;width:1px;height:457px;background:#9e9e9e"></div>
<div class="a" style="left:25px;top:221px;width:65px;height:2px;background:#217346"></div>
<div class="a" style="left:25px;top:262px;width:193px;height:361px;background:#fff;border:1px solid #a6a6a6;border-left:none"></div>
<div class="a" style="left:49px;top:292px;width:146px;height:24px;border:2px solid #a6a6a6;background:#fff"></div>
<div class="t" style="left:87.5px;top:297px;font-size:14px;color:#a6a6a6;">PivotTable4</div>
<div class="t" style="left:26px;top:328px;width:191px;text-align:center;font-size:14px;line-height:20px;color:#262626;white-space:normal">To build a report, choose<br>fields from the PivotTable<br>Field List</div>
<svg class="a" style="left:0px;top:0px;pointer-events:none" width="1366" height="736" viewBox="0 0 1366 736"><rect x="35" y="437" width="13" height="8" fill="#4a7ebb"/><rect x="35" y="446" width="13" height="44" fill="#4a7ebb"/><rect x="49" y="437" width="49" height="8" fill="#4a7ebb"/><rect x="49" y="446" width="49" height="44" fill="#c2d5ea"/><rect x="38" y="440" width="7" height="2" fill="#fff"/><rect x="52" y="440" width="7" height="2" fill="#fff"/><rect x="64" y="440" width="7" height="2" fill="#fff"/><rect x="76" y="440" width="7" height="2" fill="#fff"/><rect x="88" y="440" width="7" height="2" fill="#fff"/><rect x="38" y="449" width="7" height="2" fill="#fff"/><rect x="52" y="449" width="7" height="2" fill="#7b7672"/><rect x="64" y="449" width="7" height="2" fill="#7b7672"/><rect x="76" y="449" width="7" height="2" fill="#7b7672"/><rect x="88" y="449" width="7" height="2" fill="#7b7672"/><rect x="38" y="455" width="7" height="2" fill="#fff"/><rect x="52" y="455" width="7" height="2" fill="#7b7672"/><rect x="64" y="455" width="7" height="2" fill="#7b7672"/><rect x="76" y="455" width="7" height="2" fill="#7b7672"/><rect x="88" y="455" width="7" height="2" fill="#7b7672"/><rect x="38" y="461" width="7" height="2" fill="#fff"/><rect x="52" y="461" width="7" height="2" fill="#7b7672"/><rect x="64" y="461" width="7" height="2" fill="#7b7672"/><rect x="76" y="461" width="7" height="2" fill="#7b7672"/><rect x="88" y="461" width="7" height="2" fill="#7b7672"/><rect x="38" y="467" width="7" height="2" fill="#fff"/><rect x="52" y="467" width="7" height="2" fill="#7b7672"/><rect x="64" y="467" width="7" height="2" fill="#7b7672"/><rect x="76" y="467" width="7" height="2" fill="#7b7672"/><rect x="88" y="467" width="7" height="2" fill="#7b7672"/><rect x="38" y="473" width="7" height="2" fill="#fff"/><rect x="52" y="473" width="7" height="2" fill="#7b7672"/><rect x="64" y="473" width="7" height="2" fill="#7b7672"/><rect x="76" y="473" width="7" height="2" fill="#7b7672"/><rect x="88" y="473" width="7" height="2" fill="#7b7672"/><rect x="38" y="479" width="7" height="2" fill="#fff"/><rect x="52" y="479" width="7" height="2" fill="#7b7672"/><rect x="64" y="479" width="7" height="2" fill="#7b7672"/><rect x="76" y="479" width="7" height="2" fill="#7b7672"/><rect x="88" y="479" width="7" height="2" fill="#7b7672"/><rect x="38" y="485" width="7" height="2" fill="#fff"/><rect x="52" y="485" width="7" height="2" fill="#7b7672"/><rect x="64" y="485" width="7" height="2" fill="#7b7672"/><rect x="76" y="485" width="7" height="2" fill="#7b7672"/><rect x="88" y="485" width="7" height="2" fill="#7b7672"/><rect x="139" y="437" width="69" height="151" fill="#c2d5ea"/><rect x="146" y="445" width="41" height="3" fill="#4a7ebb"/><rect x="146" y="515" width="41" height="3" fill="#4a7ebb"/><rect x="145.5" y="454.5" width="56" height="54" fill="#fff" stroke="#9db7d8"/><rect x="154" y="461" width="42" height="2" fill="#b0b0b0"/><rect x="154" y="466" width="42" height="2" fill="#b0b0b0"/><rect x="154" y="471" width="42" height="2" fill="#b0b0b0"/><rect x="154" y="476" width="42" height="2" fill="#b0b0b0"/><rect x="154" y="481" width="42" height="2" fill="#b0b0b0"/><rect x="154" y="486" width="42" height="2" fill="#b0b0b0"/><rect x="154" y="491" width="42" height="2" fill="#b0b0b0"/><rect x="154" y="496" width="42" height="2" fill="#b0b0b0"/><rect x="154" y="501" width="42" height="2" fill="#b0b0b0"/><rect x="149" y="461" width="2" height="2" fill="#909090"/><rect x="149" y="466" width="2" height="2" fill="#909090"/><rect x="145.5" y="524.5" width="25" height="23" fill="#fff" stroke="#8eabd3"/><rect x="145.5" y="553.5" width="25" height="23" fill="#fff" stroke="#8eabd3"/><rect x="176.5" y="524.5" width="25" height="23" fill="#fff" stroke="#8eabd3"/><rect x="176.5" y="553.5" width="25" height="23" fill="#fff" stroke="#8eabd3"/><circle cx="135" cy="497.5" r="31.5" fill="#fff" stroke="#b9cde4" stroke-width="1"/><clipPath id="cc"><circle cx="135" cy="497.5" r="31"/></clipPath><g clip-path="url(#cc)"><rect x="134" y="478" width="40" height="6" fill="#a8a8a8"/><rect x="134" y="495" width="40" height="6" fill="#a8a8a8"/><rect x="134" y="512" width="40" height="6" fill="#a8a8a8"/></g><rect x="118.5" y="474.5" width="12" height="12" fill="#fff" stroke="#6e6e6e" stroke-width="1.4"/><rect x="118.5" y="491.5" width="12" height="12" fill="#fff" stroke="#6e6e6e" stroke-width="1.4"/><rect x="118.5" y="508.5" width="12" height="12" fill="#fff" stroke="#6e6e6e" stroke-width="1.4"/><path d="M120.5 497.5 L123.5 500.5 L128.5 494" fill="none" stroke="#d9583b" stroke-width="2.2"/></svg>
<div class="a" style="left:24px;top:261px;width:67px;height:23px;border:2px solid #217346"></div>
<div class="a" style="left:86px;top:279px;width:7px;height:7px;background:#fff"></div>
<div class="a" style="left:87px;top:280px;width:5px;height:5px;background:#217346"></div>
<div class="a" style="left:998px;top:205px;width:15px;height:15px;background:#fff;border:1px solid #ababab"></div>
<svg class="a" style="left:1002px;top:210px;" width="8" height="5" viewBox="0 0 8 5"><path d="M0 4.5 H7 L3.5 0.5 Z" fill="#6d6d6d"/></svg>
<div class="a" style="left:998px;top:220px;width:15px;height:423px;background:#fff;border:1px solid #ababab"></div>
<div class="a" style="left:998px;top:642px;width:15px;height:22px;background:#dadada"></div>
<div class="a" style="left:998px;top:664px;width:15px;height:15px;background:#fff;border:1px solid #ababab"></div>
<svg class="a" style="left:1002px;top:669px;" width="8" height="5" viewBox="0 0 8 5"><path d="M0 0.5 H7 L3.5 4.5 Z" fill="#6d6d6d"/></svg>
<div class="a" style="left:1016px;top:205px;width:1px;height:499px;background:#c6c6c6"></div>
<div class="t" style="left:1030.5px;top:219.5px;font-size:20px;color:#217346;">PivotTable Fields</div>
<svg class="a" style="left:1296px;top:224px;" width="10" height="5" viewBox="0 0 10 5"><path d="M0 0 H9.5 L4.75 4.8 Z" fill="#6d6d6d"/></svg>
<svg class="a" style="left:1337px;top:221px;" width="11" height="11" viewBox="0 0 11 11"><path d="M0.8 0.8 L10.2 10.2 M10.2 0.8 L0.8 10.2" stroke="#595959" stroke-width="2"/></svg>
<div class="t" style="left:1030.5px;top:257.5px;font-size:12px;color:#262626;">Choose fields to add to report:</div>
<div class="a" style="left:1308px;top:250px;width:44px;height:27px;background:#fcfcfc;border:1px solid #c0c0c0"></div>
<svg class="a" style="left:1317px;top:256px;" width="14" height="14" viewBox="0 0 14 14"><g fill="#9a9a9a"><circle cx="7" cy="7" r="4.6"/><rect x="5.7" y="0.5" width="2.6" height="13"/><rect x="0.5" y="5.7" width="13" height="2.6"/><rect x="5.7" y="0.5" width="2.6" height="13" transform="rotate(45 7 7)"/><rect x="5.7" y="0.5" width="2.6" height="13" transform="rotate(-45 7 7)"/></g><circle cx="7" cy="7" r="1.8" fill="#fcfcfc"/></svg>
<svg class="a" style="left:1340px;top:261px;" width="7" height="4" viewBox="0 0 7 4"><path d="M0 0 H6.5 L3.25 3.5 Z" fill="#6d6d6d"/></svg>
<div class="a" style="left:1029px;top:290px;width:323px;height:20px;background:#fff;border:1px solid #ababab"></div>
<div class="t" style="left:1031.5px;top:292.5px;font-size:12px;color:#595959;">Search</div>
<svg class="a" style="left:1335px;top:293px;" width="14" height="13" viewBox="0 0 14 13"><circle cx="8.5" cy="5" r="4" fill="none" stroke="#2e75b6" stroke-width="1.6"/><path d="M5.5 8 L1 12.5" stroke="#2e75b6" stroke-width="2"/></svg>
<div class="a" style="left:1029px;top:326px;width:323px;height:128px;background:#fcfcfc;overflow:hidden"></div>
<div class="a" style="left:1031px;top:327px;width:13px;height:13px;background:#fff;border:1px solid #7a7a7a"></div>
<div class="t" style="left:1050px;top:328px;font-size:12px;color:#262626;letter-spacing:-0.6px">STT</div>
<div class="a" style="left:1031px;top:346px;width:13px;height:13px;background:#fff;border:1px solid #7a7a7a"></div>
<div class="t" style="left:1050px;top:347px;font-size:12px;color:#262626;letter-spacing:-0.6px">TÊN CÔNG CỤ, DỤNG CỤ</div>
<div class="a" style="left:1031px;top:365px;width:13px;height:13px;background:#fff;border:1px solid #7a7a7a"></div>
<div class="t" style="left:1050px;top:366px;font-size:12px;color:#262626;letter-spacing:-0.6px">MÃCÔNG CỤ</div>
<div class="a" style="left:1031px;top:384px;width:13px;height:13px;background:#fff;border:1px solid #7a7a7a"></div>
<div class="t" style="left:1050px;top:385px;font-size:12px;color:#262626;letter-spacing:-0.6px">NGÀY TĂNG</div>
<div class="a" style="left:1031px;top:403px;width:13px;height:13px;background:#fff;border:1px solid #7a7a7a"></div>
<div class="t" style="left:1050px;top:404px;font-size:12px;color:#262626;letter-spacing:-0.6px">SỐ KỲ PHÂN BỔ</div>
<div class="a" style="left:1031px;top:422px;width:13px;height:13px;background:#fff;border:1px solid #7a7a7a"></div>
<div class="t" style="left:1050px;top:423px;font-size:12px;color:#262626;letter-spacing:-0.6px">NGUYÊN GIÁ</div>
<div class="a" style="left:1031px;top:441px;width:13px;height:13px;background:#fff;border:1px solid #7a7a7a"></div>
<div class="t" style="left:1050px;top:442px;font-size:12px;color:#262626;letter-spacing:-0.6px">GIÁ TRỊ ĐÃ PHÂN BỔ</div>
<div class="a" style="left:1336px;top:328px;width:15px;height:15px;background:#fff;border:1px solid #ababab"></div>
<svg class="a" style="left:1340px;top:333px;" width="8" height="5" viewBox="0 0 8 5"><path d="M0 4.5 H7 L3.5 0.5 Z" fill="#6d6d6d"/></svg>
<div class="a" style="left:1336px;top:343px;width:15px;height:55px;background:#fff;border:1px solid #ababab"></div>
<div class="a" style="left:1336px;top:398px;width:15px;height:39px;background:#ececec"></div>
<div class="a" style="left:1336px;top:437px;width:15px;height:15px;background:#fff;border:1px solid #ababab"></div>
<svg class="a" style="left:1340px;top:442px;" width="8" height="5" viewBox="0 0 8 5"><path d="M0 0.5 H7 L3.5 4.5 Z" fill="#6d6d6d"/></svg>
<div class="a" style="left:1031px;top:470px;width:325px;height:1px;background-image:linear-gradient(90deg,#b8b8b8 1px,transparent 1px);background-size:3px 1px"></div>
<div class="t" style="left:1033px;top:477px;font-size:12px;color:#262626;letter-spacing:-0.2px">Drag fields between areas below:</div>
<svg class="a" style="left:1035px;top:509px;" width="12" height="11" viewBox="0 0 12 11"><path d="M0.5 0.5 H11.5 L7 5.5 V10.5 L5 9.5 V5.5 Z" fill="#8a8a8a"/></svg>
<div class="t" style="left:1055px;top:510px;font-size:12px;color:#262626;">Filters</div>
<svg class="a" style="left:1199px;top:508px;" width="10" height="12" viewBox="0 0 10 12"><g fill="#8a8a8a"><rect x="0" y="0" width="3" height="11"/><rect x="4" y="0" width="1.2" height="11"/><rect x="6.2" y="0" width="1.2" height="11"/><rect x="8.4" y="0" width="1.2" height="11"/></g></svg>
<div class="t" style="left:1217.5px;top:510px;font-size:12px;color:#262626;">Columns</div>
<div class="a" style="left:1032px;top:527px;width:153px;height:47px;background:#fcfcfc"></div>
<div class="a" style="left:1194px;top:527px;width:158px;height:47px;background:#fcfcfc"></div>
<div class="a" style="left:1191px;top:507px;width:1px;height:147px;background:#c8c8c8"></div>
<div class="a" style="left:1032px;top:580px;width:320px;height:1px;background:#c8c8c8"></div>
<svg class="a" style="left:1036px;top:590px;" width="11" height="10" viewBox="0 0 11 10"><g fill="#8a8a8a"><rect x="0" y="0" width="10" height="2"/><rect x="0" y="3" width="10" height="1"/><rect x="0" y="5" width="10" height="1"/><rect x="0" y="7" width="10" height="1"/><rect x="0" y="9" width="10" height="1"/></g></svg>
<div class="t" style="left:1055px;top:590px;font-size:12px;color:#262626;">Rows</div>
<svg class="a" style="left:1199px;top:589px;" width="11" height="11" viewBox="0 0 11 11"><path d="M10 2.5 V0.8 H0.8 L5 5.5 L0.8 10.2 H10 V8.5" fill="none" stroke="#7a7a7a" stroke-width="1.4"/></svg>
<div class="t" style="left:1217.5px;top:590px;font-size:12px;color:#262626;">Values</div>
<div class="a" style="left:1032px;top:607px;width:153px;height:47px;background:#fcfcfc"></div>
<div class="a" style="left:1194px;top:607px;width:158px;height:47px;background:#fcfcfc"></div>
<div class="a" style="left:1032px;top:678px;width:13px;height:13px;background:#fff;border:1px solid #8a8a8a"></div>
<div class="t" style="left:1051px;top:679px;font-size:12px;color:#262626;letter-spacing:-0.2px">Defer Layout Update</div>
<div class="a" style="left:1305px;top:674px;width:46px;height:21px;background:#fafafa"></div>
<div class="t" style="left:1309px;top:679px;font-size:12px;color:#a6a6a6;">Update</div>
<div class="a" style="left:0px;top:678px;width:995px;height:1px;background:#9e9e9e"></div>
<svg class="a" style="left:26px;top:687px;" width="6" height="9" viewBox="0 0 6 9"><path d="M5.5 0 V8.5 L0.5 4.25 Z" fill="#217346"/></svg>
<svg class="a" style="left:55px;top:687px;" width="6" height="9" viewBox="0 0 6 9"><path d="M0.5 0 V8.5 L5.5 4.25 Z" fill="#217346"/></svg>
<div class="a" style="left:81px;top:694px;width:2px;height:2px;background:#217346"></div>
<div class="a" style="left:85px;top:694px;width:2px;height:2px;background:#217346"></div>
<div class="a" style="left:89px;top:694px;width:2px;height:2px;background:#217346"></div>
<div class="a" style="left:100px;top:683px;width:1px;height:19px;background:#a6a6a6"></div>
<div class="t" style="left:113px;top:685px;font-size:13px;color:#444444;letter-spacing:-0.4px">Khấu hao</div>
<div class="a" style="left:182px;top:683px;width:1px;height:19px;background:#a6a6a6"></div>
<div class="t" style="left:195.5px;top:685px;font-size:13px;color:#444444;letter-spacing:-0.4px">CĐPS</div>
<div class="a" style="left:239px;top:683px;width:1px;height:19px;background:#a6a6a6"></div>
<div class="t" style="left:252px;top:685px;font-size:13px;color:#444444;letter-spacing:-0.4px">Sheet3</div>
<div class="a" style="left:304px;top:683px;width:1px;height:19px;background:#a6a6a6"></div>
<div class="t" style="left:317px;top:685px;font-size:13px;color:#444444;letter-spacing:-0.4px">Sheet1</div>
<div class="a" style="left:369px;top:683px;width:1px;height:19px;background:#a6a6a6"></div>
<div class="t" style="left:382px;top:685px;font-size:13px;color:#444444;letter-spacing:-0.4px">Sheet10</div>
<div class="a" style="left:441px;top:678px;width:73px;height:25px;background:#fff;border-left:1px solid #9e9e9e;border-right:1px solid #9e9e9e"></div>
<div class="a" style="left:441px;top:701px;width:73px;height:2px;background:#217346"></div>
<div class="t" style="left:453px;top:685px;font-size:13px;color:#217346;font-weight:bold;letter-spacing:-0.4px">Sheet11</div>
<div class="t" style="left:526px;top:685px;font-size:13px;color:#444444;letter-spacing:-0.4px">Sheet4</div>
<div class="a" style="left:578px;top:683px;width:1px;height:19px;background:#a6a6a6"></div>
<div class="t" style="left:591px;top:685px;font-size:13px;color:#444444;letter-spacing:-0.4px">Sheet2</div>
<div class="a" style="left:643px;top:683px;width:1px;height:19px;background:#a6a6a6"></div>
<div class="t" style="left:656px;top:685px;width:37px;overflow:hidden;font-size:13px;color:#444">Sheet6</div>
<div class="a" style="left:699px;top:694px;width:2px;height:2px;background:#217346"></div>
<div class="a" style="left:703px;top:694px;width:2px;height:2px;background:#217346"></div>
<div class="a" style="left:707px;top:694px;width:2px;height:2px;background:#217346"></div>
<svg class="a" style="left:723px;top:684px;" width="16" height="16" viewBox="0 0 16 16"><circle cx="8" cy="8" r="7" fill="none" stroke="#707070" stroke-width="1.3"/><path d="M8 4 V12 M4 8 H12" stroke="#707070" stroke-width="1.6"/></svg>
<div class="a" style="left:759px;top:687px;width:2px;height:2px;background:#b0b0b0"></div>
<div class="a" style="left:759px;top:691px;width:2px;height:2px;background:#b0b0b0"></div>
<div class="a" style="left:759px;top:695px;width:2px;height:2px;background:#b0b0b0"></div>
<div class="a" style="left:776px;top:685px;width:15px;height:15px;background:#fff;border:1px solid #ababab"></div>
<svg class="a" style="left:781px;top:689px;" width="5" height="8" viewBox="0 0 5 8"><path d="M4.5 0 V7.5 L0.5 3.75 Z" fill="#6d6d6d"/></svg>
<div class="a" style="left:790px;top:685px;width:177px;height:15px;background:#fff;border:1px solid #ababab"></div>
<div class="a" style="left:967px;top:685px;width:13px;height:15px;background:#dadada"></div>
<div class="a" style="left:980px;top:685px;width:15px;height:15px;background:#fff;border:1px solid #ababab"></div>
<svg class="a" style="left:986px;top:689px;" width="5" height="8" viewBox="0 0 5 8"><path d="M0.5 0 V7.5 L4.5 3.75 Z" fill="#6d6d6d"/></svg>
<div class="a" style="left:0px;top:706px;width:1366px;height:1px;background:#d2d2d2"></div>
<div class="a" style="left:0px;top:707px;width:1366px;height:21px;background:#f3f3f3"></div>
<div class="t" style="left:8.5px;top:712px;font-size:11px;color:#333333;">Ready</div>
<svg class="a" style="left:57px;top:709px;" width="15" height="15" viewBox="0 0 15 15"><rect x="2.5" y="4.5" width="11" height="9.5" fill="#fff" stroke="#6d6d6d"/><rect x="7" y="2" width="7" height="2.6" fill="#6d6d6d"/><circle cx="3.7" cy="3.5" r="2.8" fill="#6d6d6d"/><path d="M4.5 8.3 h2 M7.5 8.3 h2 M10.5 8.3 h2 M4.5 11.3 h2 M7.5 11.3 h2 M10.5 11.3 h2" stroke="#6d6d6d" stroke-width="1.2"/></svg>
<div class="a" style="left:1066px;top:707px;width:40px;height:20px;background:#c6c6c6"></div>
<svg class="a" style="left:1079px;top:710px;" width="13" height="13" viewBox="0 0 13 13"><g fill="#707070"><rect x="0" y="0" width="3.6" height="3.6"/><rect x="0" y="4.6" width="3.6" height="3.6"/><rect x="0" y="9.2" width="3.6" height="3.6"/><rect x="4.6" y="0" width="3.6" height="3.6"/><rect x="4.6" y="4.6" width="3.6" height="3.6"/><rect x="4.6" y="9.2" width="3.6" height="3.6"/><rect x="9.2" y="0" width="3.6" height="3.6"/><rect x="9.2" y="4.6" width="3.6" height="3.6"/><rect x="9.2" y="9.2" width="3.6" height="3.6"/></g></svg>
<svg class="a" style="left:1119px;top:710px;" width="14" height="13" viewBox="0 0 14 13"><g fill="none" stroke="#6d6d6d" stroke-width="1"><rect x="0.5" y="0.5" width="13" height="12"/><rect x="2.5" y="2.5" width="9" height="8"/><path d="M4.5 4.5 H9.5 M4.5 6.5 H9.5 M4.5 8.5 H9.5"/></g></svg>
<svg class="a" style="left:1159px;top:710px;" width="14" height="13" viewBox="0 0 14 13"><g fill="none" stroke="#6d6d6d" stroke-width="1"><rect x="0.5" y="0.5" width="13" height="12"/><path d="M6.5 0.5 V6.5 H0.5"/></g></svg>
<div class="a" style="left:1192px;top:716px;width:8px;height:1px;background:#6d6d6d"></div>
<div class="a" style="left:1205px;top:717px;width:100px;height:1px;background:#a6a6a6"></div>
<div class="a" style="left:1253px;top:712px;width:5px;height:11px;background:#6d6d6d"></div>
<div class="a" style="left:1309px;top:716px;width:9px;height:1px;background:#6d6d6d"></div>
<div class="a" style="left:1313px;top:712px;width:1px;height:9px;background:#6d6d6d"></div>
<div class="t" style="left:1331.5px;top:712px;font-size:11px;color:#444444;letter-spacing:-0.3px">100%</div>
<div class="a" style="left:0px;top:728px;width:1366px;height:8px;background:#202322"></div>
<div class="a" style="left:441px;top:728px;width:48px;height:8px;background:#535353"></div>
<div class="a" style="left:1361px;top:728px;width:1px;height:8px;background:#555"></div>
<div class="t" style="left:1257px;top:732px;font-size:12px;color:#fff">2:25 CH</div>
</body></html>
